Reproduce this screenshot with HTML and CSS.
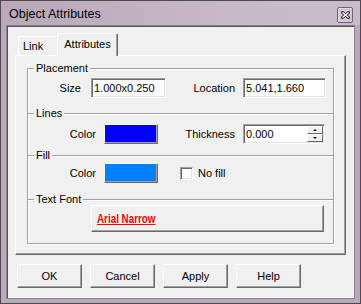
FILE: index.html
```html
<!DOCTYPE html>
<html lang="en">
<head>
    <meta charset="UTF-8">
    <title>Object Attributes</title>
    <link rel="stylesheet" href="styles.css">
</head>
<body>

    <!-- Dialog window -->
    <div class="window">

        <!-- Title bar -->
        <div class="titlebar">
            <span class="title">Object Attributes</span>
            <button class="close" title="Close">
                <svg width="9" height="8" viewBox="0 0 9 8">
                    <path d="M1.5 1.5 L7.5 6.5 M7.5 1.5 L1.5 6.5" stroke="#3a3a3a" stroke-width="3" stroke-linecap="square" fill="none" />
                    <path d="M1.5 1.5 L7.5 6.5 M7.5 1.5 L1.5 6.5" stroke="#ffffff" stroke-width="1.2" fill="none" />
                </svg>
            </button>
        </div>

        <div class="client">

            <!-- Tabs -->
            <div class="tabs">
                <div class="tab">Link</div>
                <div class="tab active">Attributes</div>
            </div>

            <div class="panel">
                <div class="group">

                    <div class="section sec-placement">
                        <span class="sec-title">Placement</span>
                        <div class="row">
                            <label class="lbl lbl-size">Size</label>
                            <input type="text" class="field field-size" value="1.000x0.250" />
                            <label class="lbl lbl-location">Location</label>
                            <input type="text" class="field field-location" value="5.041,1.660" />
                        </div>
                    </div>

                    <div class="section sec-lines">
                        <span class="sec-title">Lines</span>
                        <div class="row">
                            <label class="lbl lbl-color">Color</label>
                            <div class="swatch line-color"></div>
                            <label class="lbl lbl-thickness">Thickness</label>
                            <div class="spin">
                                <input type="text" value="0.000" />
                                <div class="spin-btns">
                                    <span class="spin-btn up"></span>
                                    <span class="spin-btn down"></span>
                                </div>
                            </div>
                        </div>
                    </div>

                    <div class="section sec-fill">
                        <span class="sec-title">Fill</span>
                        <div class="row">
                            <label class="lbl lbl-color">Color</label>
                            <div class="swatch fill-color"></div>
                            <input type="checkbox" class="check" id="nofill" />
                            <label class="check-label" for="nofill">No fill</label>
                        </div>
                    </div>

                    <div class="section sec-font">
                        <span class="sec-title">Text Font</span>
                        <div class="row row-font">
                            <button class="font-btn"><span class="font-name">Arial Narrow</span></button>
                        </div>
                    </div>

                </div>
            </div>

            <!-- Dialog buttons -->
            <div class="buttons">
                <button class="btn">OK</button>
                <button class="btn">Cancel</button>
                <button class="btn">Apply</button>
                <button class="btn">Help</button>
            </div>
        </div>
    </div>

</body>
</html>
```

FILE: styles.css
```css
body {
    margin: 0;
    font-family: "Liberation Sans", Arial, sans-serif;
    font-size: 11px;
    color: #000;
    background: #f0f0f0;
}

/* Window frame */
.window {
    width: 361px;
    height: 304px;
    box-sizing: border-box;
    border: 1px solid #4f4a50;
    background: #b9a9ba;
    display: flex;
    flex-direction: column;
}

.titlebar {
    height: 24px;
    flex: none;
    display: flex;
    align-items: flex-start;
    justify-content: space-between;
    background: linear-gradient(90deg, #b9a7ba, #c8b9c8 65%, #c9bcc9);
}

    .titlebar .title {
        font-size: 12.5px;
        line-height: 14px;
        margin: 6px 0 0 8px;
        color: #000;
    }

    .titlebar .close {
        width: 16px;
        height: 16px;
        box-sizing: border-box;
        margin: 6px 7px 0 0;
        padding: 0;
        border: 1px solid #6e6470;
        border-radius: 2px;
        background: #d2c6d2;
        box-shadow: inset 1px 1px 0 #e4dce4;
        display: flex;
        align-items: center;
        justify-content: center;
    }

.client {
    flex: 1;
    margin: 0 5px 4px;
    border: 1px solid #8a7f8b;
    padding: 1px;
    box-shadow: inset 1px 1px 0 #555, inset -1px -1px 0 #fff;
    background: #f0f0f0;
    display: flex;
    flex-direction: column;
}

/* Tabs */
.tabs {
    display: flex;
    align-items: flex-end;
    height: 22px;
    margin: 6px 0 0 10px;
}

    .tabs .tab {
        box-sizing: border-box;
        height: 19px;
        width: 41px;
        padding: 3px 0 0 4px;
        line-height: 13px;
        border: 1px solid;
        border-bottom: none;
        border-color: #fff #696969 transparent #fff;
        border-radius: 2px 2px 0 0;
        box-shadow: inset -1px 0 0 #a0a0a0;
        background: #f0f0f0;
    }

    .tabs .tab.active {
        position: relative;
        z-index: 1;
        width: 61px;
        height: 23px;
        margin: 0 0 -1px -2px;
        padding: 4px 0 0;
        text-align: center;
    }

.panel {
    height: 200px;
    box-sizing: border-box;
    margin: 0 7px;
    border: 1px solid;
    border-color: #fff #696969 #696969 #fff;
    box-shadow: inset -1px -1px 0 #a0a0a0;
    overflow: hidden;
}

/* Group box with separators */
.group {
    margin: 12px 11px 0 11px;
    border: 1px solid #a0a0a0;
    border-top: none;
    box-shadow: 1px 1px 0 #fff, inset 1px 0 0 #fff;
}

.section {
    border-top: 1px solid #a0a0a0;
    box-shadow: inset 0 1px 0 #fff;
}

    .section .sec-title {
        display: block;
        width: max-content;
        line-height: 13px;
        margin: -7px 0 -6px 6px;
        padding: 0 2px;
        background: #f0f0f0;
    }

.sec-placement { padding-bottom: 15px; }
.sec-placement .row { margin-top: 9px; }
.sec-lines { padding-bottom: 11px; }
.sec-lines .row { margin-top: 10px; }
.sec-fill { padding-bottom: 16px; }
.sec-fill .row { margin-top: 7px; }
.sec-font { padding-bottom: 11px; }
.sec-font .row { margin-top: 5px; }

.row {
    display: flex;
    align-items: center;
    height: 20px;
}

    .row.row-font {
        height: 27px;
    }

.lbl {
    line-height: 13px;
    text-align: right;
    flex: none;
}

.lbl-size { width: 53px; }
.lbl-location { width: 69px; }
.lbl-color { width: 68px; }
.lbl-thickness { width: 77px; }

.field {
    box-sizing: border-box;
    height: 20px;
    margin: 0;
    padding: 0 2px;
    font: inherit;
    color: #000;
    background: #fff;
    border: 1px solid;
    border-color: #a0a0a0 #fff #fff #a0a0a0;
    box-shadow: inset 1px 1px 0 #696969, inset -1px -1px 0 #e3e3e3;
    outline: none;
}

.field-size { width: 75px; margin-left: 10px; }
.field-location { width: 83px; margin-left: 8px; }

/* Spin box */
.spin {
    box-sizing: border-box;
    display: flex;
    width: 82px;
    height: 20px;
    margin-left: 8px;
    padding: 1px;
    background: #fff;
    border: 1px solid;
    border-color: #a0a0a0 #fff #fff #a0a0a0;
    box-shadow: inset 1px 1px 0 #696969, inset -1px -1px 0 #e3e3e3;
}

    .spin input {
        flex: 1;
        min-width: 0;
        margin: 0;
        padding: 0 1px;
        border: none;
        font: inherit;
        background: #fff;
        outline: none;
    }

.spin-btns {
    display: flex;
    flex-direction: column;
    width: 16px;
}

.spin-btn {
    box-sizing: border-box;
    height: 8px;
    background: #f0f0f0;
    border: 1px solid;
    border-color: #fff #696969 #696969 #fff;
    display: flex;
    align-items: center;
    justify-content: center;
}

    .spin-btn::after {
        content: "";
        border-left: 2px solid transparent;
        border-right: 2px solid transparent;
    }

    .spin-btn.up::after {
        border-bottom: 2px solid #000;
    }

    .spin-btn.down::after {
        border-top: 2px solid #000;
    }

/* Colour swatches */
.swatch {
    box-sizing: border-box;
    width: 54px;
    height: 20px;
    margin-left: 8px;
    border: 1px solid;
    border-color: #fff #696969 #696969 #fff;
    box-shadow: inset -1px -1px 0 #a0a0a0;
}

.line-color { background-color: #0000ff; }
.fill-color { background-color: #0080ff; }

.check {
    appearance: none;
    -webkit-appearance: none;
    box-sizing: border-box;
    width: 13px;
    height: 13px;
    margin: 0 0 0 22px;
    background: #fff;
    border: 1px solid;
    border-color: #a0a0a0 #fff #fff #a0a0a0;
    box-shadow: inset 1px 1px 0 #696969, inset -1px -1px 0 #e3e3e3;
}

.check-label {
    margin-left: 5px;
    line-height: 13px;
}

.font-btn {
    box-sizing: border-box;
    width: 233px;
    height: 27px;
    margin-left: 63px;
    padding: 0 0 0 5px;
    text-align: left;
    background: #f0f0f0;
    border: 1px solid;
    border-color: #fff #696969 #696969 #fff;
    box-shadow: inset -1px -1px 0 #a0a0a0;
}

    /* no narrow face installed: squeeze Arial metrics to Arial Narrow width */
    .font-btn .font-name {
        display: inline-block;
        font-family: "Liberation Sans", Arial, sans-serif;
        font-size: 12px;
        font-weight: bold;
        color: #ff0000;
        text-decoration: underline;
        transform: scaleX(0.82);
        transform-origin: left center;
    }

/* Dialog buttons */
.buttons {
    display: flex;
    gap: 8px;
    margin: 9px 0 0 9px;
}

.btn {
    box-sizing: border-box;
    width: 65px;
    height: 24px;
    padding: 0;
    font: inherit;
    color: #000;
    background: #f0f0f0;
    border: 1px solid;
    border-color: #fff #696969 #696969 #fff;
    box-shadow: inset -1px -1px 0 #a0a0a0;
}
```
